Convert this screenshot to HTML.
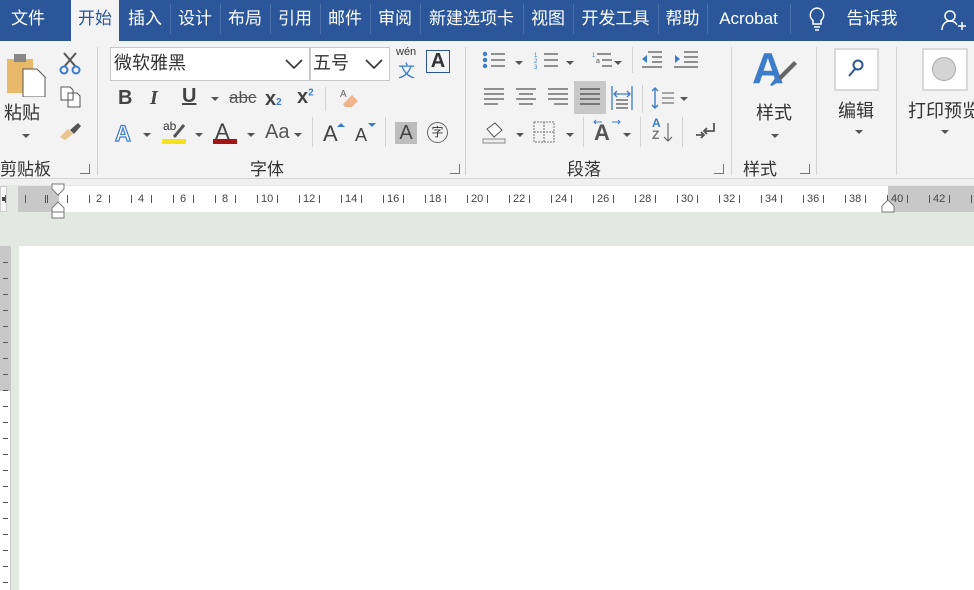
<!DOCTYPE html>
<html><head><meta charset="utf-8"><style>
*{margin:0;padding:0;box-sizing:border-box}
body{width:974px;height:590px;overflow:hidden;background:#e3e8e3;font-family:"Liberation Sans","Noto Sans CJK SC",sans-serif;position:relative;color:#333}
.a{position:absolute}
#tabs{left:0;top:0;width:974px;height:41px;background:#2b579a}
.t{position:absolute;top:0;height:41px;line-height:37px;color:#fff;font-size:17px;text-align:center}
.sep{position:absolute;top:4px;width:1px;height:30px;background:#4a70aa}
#rib{left:0;top:41px;width:974px;height:138px;background:#f3f3f3;border-bottom:1px solid #d4d4d4}
.g{position:absolute;top:6px;width:1px;height:128px;background:#d2d2d2}
.lbl{position:absolute;top:114px;font-size:17px;color:#333}
.ic{position:absolute;font-size:18px;font-weight:bold;color:#444}
.dd{position:absolute;width:0;height:0;border-left:4px solid transparent;border-right:4px solid transparent;border-top:4px solid #555}
.ln{position:absolute;height:1px;background:#555}
.launch{position:absolute;width:10px;height:10px;border:1px solid #777;border-top:none;border-left:none}
</style></head><body>
<div id="tabs" class="a">
<div class="t" style="left:0;width:56px">文件</div>
<div class="t" style="left:71px;width:48px;background:#f3f3f3;color:#2b579a;height:41px">开始</div>
<div class="t" style="left:120px;width:50px">插入</div><div class="sep" style="left:170px"></div>
<div class="t" style="left:170px;width:50px">设计</div><div class="sep" style="left:220px"></div>
<div class="t" style="left:220px;width:50px">布局</div><div class="sep" style="left:270px"></div>
<div class="t" style="left:270px;width:50px">引用</div><div class="sep" style="left:320px"></div>
<div class="t" style="left:320px;width:50px">邮件</div><div class="sep" style="left:370px"></div>
<div class="t" style="left:370px;width:50px">审阅</div><div class="sep" style="left:420px"></div>
<div class="t" style="left:420px;width:103px">新建选项卡</div><div class="sep" style="left:523px"></div>
<div class="t" style="left:523px;width:50px">视图</div><div class="sep" style="left:573px"></div>
<div class="t" style="left:573px;width:85px">开发工具</div><div class="sep" style="left:658px"></div>
<div class="t" style="left:658px;width:49px">帮助</div><div class="sep" style="left:707px"></div>
<div class="t" style="left:707px;width:83px">Acrobat</div><div class="sep" style="left:790px"></div>
<svg class="a" style="left:806px;top:6px" width="22" height="26"><path d="M11 2a7 7 0 0 0-4 12.5V18h8v-3.5A7 7 0 0 0 11 2zM8 21h6M9 24h4" stroke="#fff" stroke-width="1.5" fill="none"/></svg>
<div class="t" style="left:840px;width:64px">告诉我</div>
<svg class="a" style="left:940px;top:8px" width="30" height="26"><circle cx="10" cy="8" r="5" stroke="#fff" stroke-width="1.5" fill="none"/><path d="M2 22c0-6 4-9 8-9s6 2 7 4M18 18h8M22 14v8" stroke="#fff" stroke-width="1.5" fill="none"/></svg>
</div>

<div id="rib" class="a">
<!-- clipboard -->
<svg class="a" style="left:5px;top:10px" width="44" height="46"><rect x="2" y="8" width="26" height="34" fill="#e9b96a"/><rect x="9" y="3" width="12" height="8" fill="#888"/><path d="M18 18h14l8 8v20H18z" fill="#fff" stroke="#555"/></svg>
<div class="a" style="left:4px;top:58px;font-size:18px">粘贴</div>
<div class="dd" style="left:22px;top:93px"></div>
<svg class="a" style="left:59px;top:10px" width="22" height="24"><path d="M5 2l12 14M17 2L5 16" stroke="#555" stroke-width="2"/><circle cx="5" cy="19" r="3.5" stroke="#3d7cc9" stroke-width="2" fill="none"/><circle cx="17" cy="19" r="3.5" stroke="#3d7cc9" stroke-width="2" fill="none"/></svg>
<svg class="a" style="left:60px;top:45px" width="22" height="22"><path d="M1 1h9l3 3v10H1z M8 7h9l3 3v11H8z" fill="#fff" stroke="#555"/></svg>
<svg class="a" style="left:58px;top:80px" width="26" height="20"><path d="M2 16l8-8 5 5-8 6z" fill="#e7c48b"/><path d="M12 9l8-7 3 3-7 8z" fill="#555"/></svg>
<div class="a" style="left:0;top:114px;font-size:17px">剪贴板</div>
<div class="launch" style="left:80px;top:123px"></div>
<div class="g" style="left:97px"></div>

<!-- font -->
<div class="a" style="left:110px;top:6px;width:200px;height:34px;background:#fff;border:1px solid #c8c8c8;font-size:18px;line-height:31px;padding-left:3px">微软雅黑</div>
<svg class="a" style="left:284px;top:16px" width="20" height="14"><path d="M2 3l8 8 8-8" stroke="#333" stroke-width="1.6" fill="none"/></svg>
<div class="a" style="left:310px;top:6px;width:80px;height:34px;background:#fff;border:1px solid #c8c8c8;font-size:18px;line-height:31px;padding-left:2px">五号</div>
<svg class="a" style="left:364px;top:16px" width="20" height="14"><path d="M2 3l8 8 8-8" stroke="#333" stroke-width="1.6" fill="none"/></svg>
<div class="a" style="left:396px;top:5px;font-size:11px;color:#333">wén</div>
<div class="a" style="left:398px;top:16px;font-size:17px;color:#3d7cc9">文</div>
<div class="a" style="left:426px;top:9px;width:24px;height:23px;border:1px solid #2b579a;font-size:20px;text-align:center;line-height:21px;font-weight:bold">A</div>

<div class="ic" style="left:118px;top:46px;font-size:20px">B</div>
<div class="ic" style="left:150px;top:46px;font-size:20px;font-style:italic;font-family:'Liberation Serif',serif">I</div>
<div class="ic" style="left:182px;top:44px;font-size:20px;text-decoration:underline">U</div>
<div class="dd" style="left:211px;top:56px"></div>
<div class="a" style="left:229px;top:47px;font-size:17px;color:#555;text-decoration:line-through">abc</div>
<div class="ic" style="left:265px;top:47px;font-size:20px">x<span style="font-size:10px;color:#3d7cc9">2</span></div>
<div class="ic" style="left:297px;top:45px;font-size:20px">x<sup style="font-size:10px;color:#3d7cc9">2</sup></div>
<div class="a" style="left:325px;top:46px;width:1px;height:24px;background:#d4d4d4"></div>
<svg class="a" style="left:337px;top:45px" width="24" height="24"><path d="M6 18l9-9 6 6-6 6H8z" fill="#f0b48c"/><text x="3" y="11" font-size="10" fill="#666">A</text></svg>

<div class="a" style="left:115px;top:80px;font-size:22px;color:#fff;-webkit-text-stroke:1.2px #3d7cc9;font-weight:bold">A</div>
<div class="dd" style="left:143px;top:92px"></div>
<div class="a" style="left:163px;top:78px;font-size:12px">ab</div>
<svg class="a" style="left:170px;top:80px" width="18" height="18"><path d="M4 16l10-12" stroke="#555" stroke-width="3"/></svg>
<div class="a" style="left:162px;top:98px;width:24px;height:5px;background:#f5e31a"></div>
<div class="dd" style="left:195px;top:92px"></div>
<div class="ic" style="left:215px;top:78px;font-size:22px;font-weight:normal">A</div>
<div class="a" style="left:213px;top:98px;width:24px;height:5px;background:#a31515"></div>
<div class="dd" style="left:247px;top:92px"></div>
<div class="a" style="left:265px;top:80px;font-size:20px;color:#555">Aa</div>
<div class="dd" style="left:294px;top:92px"></div>
<div class="a" style="left:312px;top:76px;width:1px;height:30px;background:#d4d4d4"></div>
<div class="ic" style="left:323px;top:80px;font-size:22px;font-weight:normal">A</div>
<div class="dd" style="left:337px;top:82px;border-top:none;border-bottom:4px solid #3d7cc9"></div>
<div class="ic" style="left:355px;top:84px;font-size:18px;font-weight:normal">A</div>
<div class="dd" style="left:368px;top:82px;border-top-color:#3d7cc9"></div>
<div class="a" style="left:385px;top:76px;width:1px;height:30px;background:#d4d4d4"></div>
<div class="a" style="left:395px;top:81px;width:22px;height:22px;background:#bdbdbd;font-size:20px;text-align:center;line-height:22px;color:#444">A</div>
<div class="a" style="left:427px;top:81px;width:21px;height:21px;border:1.5px solid #666;border-radius:50%;font-size:12px;text-align:center;line-height:18px">字</div>
<div class="lbl" style="left:250px">字体</div>
<div class="launch" style="left:450px;top:123px"></div>
<div class="g" style="left:465px"></div>

<!-- paragraph -->
<svg class="a" style="left:480px;top:8px" width="160" height="22" stroke="#555" stroke-width="1.2">
<g fill="#3d7cc9" stroke="none"><circle cx="5" cy="5" r="2.2"/><circle cx="5" cy="11" r="2.2"/><circle cx="5" cy="17" r="2.2"/></g>
<path d="M11 5h14M11 11h14M11 17h14M64 5h14M64 11h14M64 17h14M117 5h14M122 11h10M122 17h10"/>
<text x="54" y="8" font-size="6" fill="#3d7cc9" stroke="none">1</text><text x="54" y="14" font-size="6" fill="#3d7cc9" stroke="none">2</text><text x="54" y="20" font-size="6" fill="#3d7cc9" stroke="none">3</text>
<text x="112" y="8" font-size="6" fill="#3d7cc9" stroke="none">1</text><text x="116" y="14" font-size="7" fill="#555" stroke="none">a</text>
</svg>
<div class="dd" style="left:515px;top:20px"></div><div class="dd" style="left:566px;top:20px"></div><div class="dd" style="left:614px;top:20px"></div>
<div class="a" style="left:632px;top:6px;width:1px;height:26px;background:#d4d4d4"></div>
<svg class="a" style="left:640px;top:8px" width="60" height="22" stroke="#555" stroke-width="1.2"><path d="M8 3h14M12 8h10M12 13h10M2 18h20M44 3h14M44 8h14M44 13h14M34 18h24" /><path d="M2 10l5-4v8z" fill="#3d7cc9" stroke="none"/><path d="M40 10l-5-4v8z" fill="#3d7cc9" stroke="none"/></svg>

<svg class="a" style="left:482px;top:44px" width="160" height="26" stroke="#555" stroke-width="1.2">
<path d="M2 4h20M2 9h20M2 14h20M2 19h14M34 4h20M37 9h14M34 14h20M37 19h14M66 4h20M66 9h20M66 14h20M72 19h14"/>
</svg>
<div class="a" style="left:574px;top:40px;width:32px;height:33px;background:#c8c8c8"></div>
<svg class="a" style="left:578px;top:44px" width="24" height="26" stroke="#444" stroke-width="1.3"><path d="M2 4h20M2 9h20M2 14h20M2 19h20"/></svg>
<svg class="a" style="left:610px;top:43px" width="24" height="28" stroke="#3d7cc9" stroke-width="1.3" fill="none"><path d="M2 2v24M22 2v24M5 10h14M7 7l-3 3 3 3M17 7l3 3-3 3"/><path d="M6 16h12M6 20h12M6 24h12" stroke="#555"/></svg>
<div class="a" style="left:642px;top:44px;width:1px;height:28px;background:#d4d4d4"></div>
<svg class="a" style="left:650px;top:44px" width="30" height="26" fill="none"><path d="M5 3v20M2 6l3-3 3 3M2 20l3 3 3-3" stroke="#3d7cc9" stroke-width="1.4"/><path d="M12 8h12M12 13h12M12 18h12" stroke="#555"/></svg>
<div class="dd" style="left:680px;top:56px"></div>

<svg class="a" style="left:481px;top:78px" width="26" height="26"><path d="M6 10l8-6 7 7-8 7z" fill="#fff" stroke="#555"/><rect x="2" y="20" width="22" height="4" fill="#eee" stroke="#888"/></svg>
<div class="dd" style="left:516px;top:92px"></div>
<svg class="a" style="left:533px;top:80px" width="22" height="22" stroke="#777" stroke-dasharray="2 1" fill="none"><rect x="1" y="1" width="20" height="20"/><path d="M11 1v20M1 11h20"/></svg>
<div class="dd" style="left:566px;top:92px"></div>
<div class="a" style="left:583px;top:76px;width:1px;height:30px;background:#d4d4d4"></div>
<div class="a" style="left:594px;top:79px;font-size:22px;font-weight:bold;color:#555">A</div>
<svg class="a" style="left:592px;top:77px" width="30" height="8" stroke="#3d7cc9" fill="none"><path d="M2 4h8M4 2l-2 2 2 2M20 4h8M26 2l2 2-2 2"/></svg>
<div class="dd" style="left:623px;top:92px"></div>
<div class="a" style="left:640px;top:76px;width:1px;height:30px;background:#d4d4d4"></div>
<div class="a" style="left:652px;top:76px;font-size:12px;font-weight:bold;color:#3d7cc9;line-height:12px">A<br><span style="color:#777">Z</span></div>
<svg class="a" style="left:662px;top:80px" width="12" height="24" stroke="#555" fill="none"><path d="M6 2v18M2 16l4 4 4-4"/></svg>
<div class="a" style="left:682px;top:76px;width:1px;height:30px;background:#d4d4d4"></div>
<svg class="a" style="left:694px;top:80px" width="22" height="20" stroke="#555" stroke-width="1.8" fill="none"><path d="M20 2v8H10M13 7l-3 3 3 3M2 14h8M7 11l3 3-3 3"/></svg>
<div class="lbl" style="left:567px">段落</div>
<div class="launch" style="left:714px;top:123px"></div>
<div class="g" style="left:731px"></div>

<!-- styles -->
<div class="a" style="left:752px;top:3px;font-size:44px;font-weight:bold;color:#3d7cc9">A</div>
<svg class="a" style="left:766px;top:18px" width="32" height="30"><path d="M4 26l6-8 4 4-8 5z" fill="#3d7cc9"/><path d="M12 18l16-16 3 3-16 16z" fill="#666"/></svg>
<div class="a" style="left:756px;top:58px;font-size:18px">样式</div>
<div class="dd" style="left:771px;top:93px"></div>
<div class="lbl" style="left:743px">样式</div>
<div class="launch" style="left:800px;top:123px"></div>
<div class="g" style="left:816px"></div>

<div class="a" style="left:834px;top:7px;width:45px;height:43px;background:#fff;border:2px solid #dadada"></div>
<svg class="a" style="left:846px;top:17px" width="20" height="22" stroke="#2b579a" stroke-width="2" fill="none"><circle cx="12" cy="7" r="4.5"/><path d="M9 11l-6 7"/></svg>
<div class="a" style="left:838px;top:56px;font-size:18px">编辑</div>
<div class="dd" style="left:855px;top:89px"></div>
<div class="g" style="left:896px"></div>

<div class="a" style="left:922px;top:7px;width:46px;height:43px;background:#fff;border:2px solid #dadada"></div>
<div class="a" style="left:932px;top:16px;width:24px;height:24px;border-radius:50%;background:#d4d4d4;border:1px solid #aaa"></div>
<div class="a" style="left:908px;top:56px;font-size:18px;white-space:nowrap">打印预览</div>
<div class="dd" style="left:941px;top:89px"></div>
</div>

<!-- ruler -->
<div class="a" style="left:0;top:179px;width:974px;height:6px;background:#f0f0f0"></div>
<div class="a" style="left:0;top:186px;width:7px;height:26px;background:#f7f7f7;border:1px solid #ccc"></div>
<div class="a" style="left:2px;top:197px;width:3px;height:4px;background:#444"></div>
<div class="a" style="left:18px;top:186px;width:956px;height:26px;background:#c8c8c8"></div>
<div class="a" style="left:59px;top:186px;width:829px;height:26px;background:#fff"></div>
<div class="a" style="left:11px;top:212px;width:963px;height:34px;background:#e3e8e3"></div>
<div id="rl" class="a" style="left:0;top:186px;width:974px;height:26px;font-size:11px;color:#444;line-height:26px"></div>
<svg class="a" style="left:51px;top:183px" width="16" height="36" fill="#fff" stroke="#777"><path d="M1 1h12v5l-6 6-6-6z"/><path d="M1 25l6-6 6 6v4H1z"/><rect x="1" y="29" width="12" height="6"/></svg>
<svg class="a" style="left:881px;top:196px" width="16" height="18" fill="#fff" stroke="#777"><path d="M1 16V10l6-6 6 6v6z"/></svg>

<!-- vertical ruler + page -->
<div class="a" style="left:0;top:246px;width:11px;height:344px;background:#fff;border-right:1px solid #ccc"></div>
<div class="a" style="left:0;top:246px;width:11px;height:145px;background:#c8c8c8"></div>
<div class="a" style="left:19px;top:246px;width:955px;height:344px;background:#fff"></div>
<div id="vr"></div>
<script>
var r=document.getElementById('rl'),h='';
function tk(x){h+='<div style="position:absolute;left:'+x+'px;top:9px;width:1px;height:8px;background:#555"></div>';}
for(var n=-2;n<=44;n+=2){var x=99+(n/2-1)*42;if(n>0&&n!=0)h+='<div style="position:absolute;left:'+(x-6)+'px;width:12px;text-align:center">'+n+'</div>';tk(x-10);tk(x+10);}
tk(25);tk(45);tk(67);
r.innerHTML=h;
var v='';for(var y=262;y<590;y+=16)v+='<div style="position:absolute;left:3px;top:'+y+'px;width:5px;height:1px;background:#555"></div>';
document.getElementById('vr').innerHTML=v;
</script>
</body></html>
